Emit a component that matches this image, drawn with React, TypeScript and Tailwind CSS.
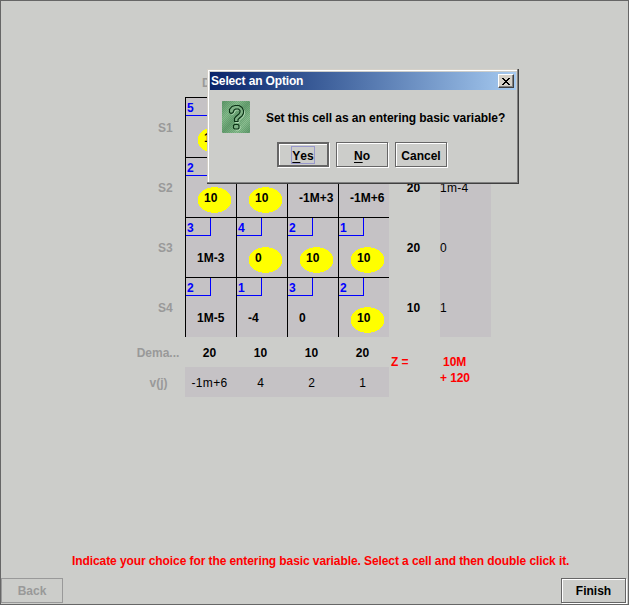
import React from "react";

type Cell = { cost: string; value: string; basic?: boolean };

const rows: { label: string; cells: Cell[] }[] = [
  { label: "S1", cells: [{ cost: "5", value: "10", basic: true }, { cost: "", value: "" }, { cost: "", value: "" }, { cost: "", value: "" }] },
  { label: "S2", cells: [{ cost: "2", value: "10", basic: true }, { cost: "", value: "10", basic: true }, { cost: "", value: "-1M+3" }, { cost: "", value: "-1M+6" }] },
  { label: "S3", cells: [{ cost: "3", value: "1M-3" }, { cost: "4", value: "0", basic: true }, { cost: "2", value: "10", basic: true }, { cost: "1", value: "10", basic: true }] },
  { label: "S4", cells: [{ cost: "2", value: "1M-5" }, { cost: "1", value: "-4" }, { cost: "3", value: "0" }, { cost: "2", value: "10", basic: true }] },
];
const supply = ["", "20", "20", "10"];
const multipliers = ["", "1m-4", "0", "1"];

function TableCell({ cost, value, basic }: Cell) {
  return (
    <div className="relative h-[60px] w-[51px] border-l border-t border-black">
      <div className="flex h-[18px] w-[25px] items-center border-b border-r border-[#0000ff] pl-[1px] pt-[3px] text-[#0000ff]">{cost}</div>
      {basic && (
        <svg className="absolute left-[11px] top-[29px]" width="35" height="26" shapeRendering="crispEdges">
          <ellipse cx="17.5" cy="13" rx="17" ry="12.8" fill="#ffff00" />
        </svg>
      )}
      <div className={`absolute top-[33px] whitespace-nowrap leading-[15px] ${basic ? "left-[18px]" : "left-[11px]"}`}>{value}</div>
    </div>
  );
}

function Button({ children, className = "" }: { children: React.ReactNode; className?: string }) {
  return (
    <div className={`border border-[#666] shadow-[inset_1px_1px_0_#fff,1px_1px_0_#fff] ${className}`}>
      <div className="flex h-full items-center justify-center pt-[3px]">{children}</div>
    </div>
  );
}

const MARK = "M7.5 9.5V8.5L10 5.5L13 4.5H17L20 6.5L21.5 9.5V12L20 15L17.5 17L16 18.5V20.5H12.5V17.5L14 15.5L17 13L18 11V9.5L16.5 8H13.5L12 9L11 11.5L9 12.5L7.5 11.5Z M12.5 23.5H16L17 24.5V27L16 28H12.5L11.5 27V24.5Z";

function QuestionIcon() {
  return (
    <svg width="28" height="32" viewBox="0 0 28 32">
      <defs>
        <linearGradient id="tile" x1="0" y1="0" x2="1" y2="1">
          <stop offset="0" stopColor="#5c9668" />
          <stop offset=".3" stopColor="#87bd8d" />
          <stop offset=".5" stopColor="#679f70" />
          <stop offset=".75" stopColor="#8dc092" />
          <stop offset="1" stopColor="#5b9667" />
        </linearGradient>
        <pattern id="dither" width="2" height="2" patternUnits="userSpaceOnUse">
          <path d="M0 0h1v1H0zM1 1h1v1H1z" fill="#3f7d50" opacity=".3" />
        </pattern>
      </defs>
      <rect width="28" height="32" rx="1" fill="url(#tile)" />
      <rect width="28" height="32" rx="1" fill="url(#dither)" />
      <path d={MARK} fill="none" stroke="#c5e5c5" strokeOpacity=".75" transform="translate(1 1)" />
      <path d={MARK} fill="#7fb286" stroke="#0b3316" strokeWidth="1.1" />
    </svg>
  );
}

function Dialog() {
  return (
    <div className="absolute left-[206px] top-[68px] h-[115px] w-[312px] border-b border-r border-[#404040] bg-[#cccdca]">
      <div className="h-full border-b border-r border-[#808080]">
        <div className="h-full border-l border-t border-[#d4d0c8]">
          <div className="h-full border-l border-t border-white pl-[1px] pt-[1px]">
            <div className="flex h-[18px] w-[306px] items-center justify-between bg-linear-to-r from-[#0a246a] to-[#a6caf0] pl-[1px] pr-[2px] text-white">
              <span className="tracking-[-0.15px]">Select an Option</span>
              <div className="flex h-[14px] w-[16px] items-center justify-center border border-b-[#404040] border-l-white border-r-[#404040] border-t-white bg-[#d4d0c8] shadow-[inset_-1px_-1px_0_#808080]">
                <svg width="8" height="7" shapeRendering="crispEdges" fill="#000">
                  <path d="M0 0h2v1H0zM6 0h2v1H6zM1 1h2v1H1zM5 1h2v1H5zM2 2h4v1H2zM3 3h2v1H3zM2 4h4v1H2zM1 5h2v1H1zM5 5h2v1H5zM0 6h2v1H0zM6 6h2v1H6z" />
                </svg>
              </div>
            </div>
            <div className="flex h-[52px] items-start pl-[12px] pt-[11px]">
              <QuestionIcon />
              <div className="whitespace-nowrap pl-[16px] pt-[9px] leading-[16px] tracking-[-0.05px]">Set this cell as an entering basic variable?</div>
            </div>
            <div className="flex gap-[7px] pl-[67px]">
              <div className="h-[25px] w-[52px] border-2 border-[#666] shadow-[inset_1px_1px_0_#fff,1px_1px_0_#fff]">
                <div className="flex h-full items-center justify-center pt-px">
                  <span className="flex h-[18px] items-center border border-[#9999cc] pt-[2px]"><u className="underline-offset-2">Y</u>es</span>
                </div>
              </div>
              <Button className="h-[25px] w-[52px]"><span><u className="underline-offset-2">N</u>o</span></Button>
              <Button className="h-[25px] w-[52px]">Cancel</Button>
            </div>
          </div>
        </div>
      </div>
    </div>
  );
}

export default function App() {
  return (
    <div className="relative flex h-[605px] w-[629px] flex-col overflow-hidden border border-[#666] bg-[#cccdca] font-['Liberation_Sans',Arial,sans-serif] text-[12px] font-bold leading-[15px] text-black">
      <div className="ml-[130px] mt-[71px] h-[25px] pl-[71px] pt-[4px] text-[#999]">D</div>
      <div className="ml-[130px] flex">
        <div className="w-[54px] text-[#999]">
          {rows.map((r) => (
            <div key={r.label} className="flex h-[60px] items-center pl-[27px] pb-px pt-[3px]">{r.label}</div>
          ))}
        </div>
        <div className="bg-[#c5c2c5]">
          {rows.map((r) => (
            <div key={r.label} className="flex">
              {r.cells.map((c, i) => <TableCell key={i} {...c} />)}
            </div>
          ))}
        </div>
        <div className="w-[51px]">
          {supply.map((s, i) => <div key={i} className="flex h-[60px] items-center justify-center pr-[2px] pt-[3px]">{s}</div>)}
        </div>
        <div className="w-[51px] bg-[#c5c2c5] font-normal">
          {multipliers.map((s, i) => <div key={i} className="flex h-[60px] items-center pt-[3px] tracking-[0.3px]">{s}</div>)}
        </div>
      </div>
      <div className="ml-[130px] flex">
        <div className="w-[54px] text-center text-[#999]">
          <div className="flex h-[30px] items-center justify-center pt-[3px]">Dema...</div>
          <div className="flex h-[30px] items-center justify-center pl-px pt-[3px]">v(j)</div>
        </div>
        <div>
          <div className="grid h-[30px] grid-cols-[repeat(4,51px)] items-center pt-[3px] text-center">
            {["20", "10", "10", "20"].map((v, i) => <span key={i} className="pr-[2px]">{v}</span>)}
          </div>
          <div className="grid h-[30px] w-[204px] grid-cols-[repeat(4,51px)] items-center bg-[#c5c2c5] pt-[3px] text-center font-normal">
            {["-1m+6", "4", "2", "1"].map((v, i) => <span key={i} className={i === 0 ? "pr-[2px] tracking-[0.3px]" : "pr-[2px]"}>{v}</span>)}
          </div>
        </div>
        <div className="flex pl-[2px] pt-[17px] leading-[16px] text-[#ff0000]">
          <div className="w-[49px] tracking-[-0.1px]">Z =</div>
          <div><div className="pl-[3px]">10M</div><div className="tracking-[-0.1px]">+ 120</div></div>
        </div>
      </div>
      <div className="mt-[156px] whitespace-nowrap pl-[71px] leading-[16px] tracking-[-0.088px] text-[#ff0000]">Indicate your choice for the entering basic variable. Select a cell and then double click it.</div>
      <div className="mt-auto flex justify-between pb-px">
        <div className="flex h-[25px] w-[62px] items-center justify-center border border-[#999] pt-[2px] text-[#999]">Back</div>
        <Button className="mr-[2px] h-[25px] w-[65px]"><span className="-mt-px">Finish</span></Button>
      </div>
      <Dialog />
    </div>
  );
}
